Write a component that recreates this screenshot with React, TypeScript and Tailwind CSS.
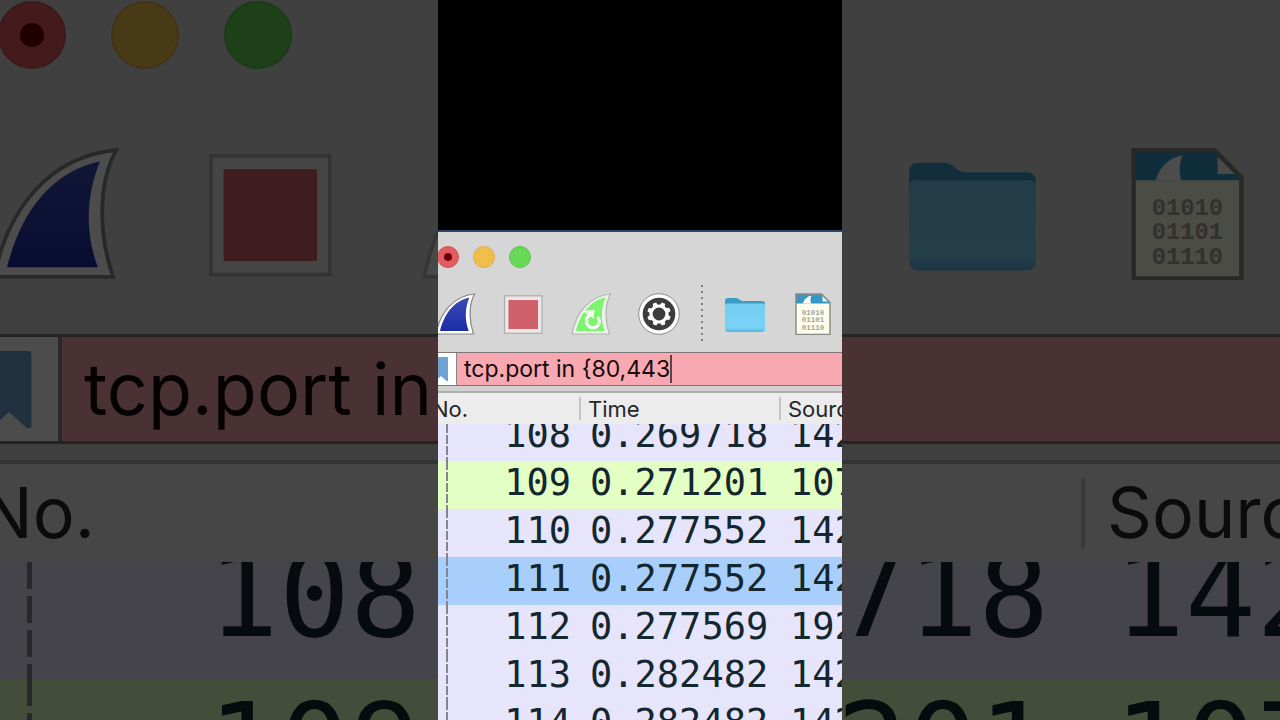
import { clsx } from "clsx";

type Variant = "front" | "backdrop";

const packets = [
  { no: "108", time: "0.269718", source: "142", tone: "tcp" },
  { no: "109", time: "0.271201", source: "107", tone: "http" },
  { no: "110", time: "0.277552", source: "142", tone: "tcp" },
  { no: "111", time: "0.277552", source: "142", tone: "selected" },
  { no: "112", time: "0.277569", source: "192", tone: "tcp" },
  { no: "113", time: "0.282482", source: "142", tone: "tcp" },
  { no: "114", time: "0.282482", source: "142", tone: "tcp" },
];

const tones: Record<string, string> = {
  tcp: "bg-[#e6e5fc]",
  http: "bg-[#e3ffc4]",
  selected: "bg-[#a8cffb]",
};

const sizes = {
  front: {
    window: "border-t-2",
    titleBar: "h-[61px] pt-[14px] -ml-px gap-[14px]",
    light: "size-[22px] border",
    lightDot: "size-2",
    toolbar: "h-[59px] -ml-1 gap-[26px]",
    slot: "size-[42px]",
    separator: "h-14 w-[2px] -mx-[5px] bg-size-[2px_6px]",
    filter: "h-[34px] border-y text-[23px]",
    bookmark: "w-[19px] border-r",
    ribbon: "h-6 w-[14px] -ml-1",
    input: "pl-[7px]",
    caret: "h-7 w-[2px]",
    gap: "h-[7px] border-b-2",
    th: "h-[31px] text-[22px] leading-none",
    no: "-ml-[6px]",
    thText: "h-[23px] border-l-[2px] pl-[7px]",
    row: "h-12 leading-[44px] text-[37px]",
    firstRow: "h-[37px]",
    noCell: "pr-2",
    cell: "pl-[11px]",
    tree: "ml-2 w-[2px] bg-[repeating-linear-gradient(#85858f_0_9px,transparent_9px_11px)]",
    cols: ["w-[141px]", "w-[200px]"],
  },
  backdrop: {
    window: "-mt-[49px] border-t-[6px]",
    titleBar: "h-[190px] pt-[44px] -ml-[2px] gap-[45px]",
    light: "size-[68px] border-2",
    lightDot: "size-6",
    toolbar: "h-[187px] -ml-3 gap-[82px]",
    slot: "size-[133px]",
    separator: "h-[177px] w-[6px] -mx-[15px] bg-size-[6px_18px]",
    filter: "h-[110px] border-y-[3px] text-[72px]",
    bookmark: "w-[62px] border-r-[4px]",
    ribbon: "h-[77px] w-[46px] -ml-[14px]",
    input: "pl-[22px]",
    caret: "h-[88px] w-[6px]",
    gap: "h-5 border-b-[4px]",
    th: "h-[98px] text-[70px] leading-none",
    no: "-ml-5",
    thText: "h-[71px] border-l-[4px] pl-[22px]",
    row: "h-[151px] leading-[135px] text-[118px]",
    firstRow: "h-[117px]",
    noCell: "pr-[27px]",
    cell: "pl-[33px]",
    tree: "ml-[27px] w-[5px] bg-[repeating-linear-gradient(#85858f_0_27px,transparent_27px_34px)]",
    cols: ["w-[448px]", "w-[633px]"],
  },
};

function FinIcon({ restart = false }: { restart?: boolean }) {
  return (
    <svg viewBox="0 0 42 42" className="size-full">
      <defs>
        <linearGradient id="fin" x1="0" y1="0" x2="0" y2="1">
          <stop offset="0" stopColor="#3d4bb5" />
          <stop offset="1" stopColor="#1b2da8" />
        </linearGradient>
      </defs>
      <path
        d="M2 41C6 20 19 3 40.500 1C34.500 12 35 28 39.500 41Z"
        fill={restart ? "#eaf3e8" : "#fff"}
        stroke={restart ? "#b4b4b4" : "#858585"}
        strokeWidth="1.2"
      />
      <path
        d="M6 38C10 22 19 8 35.400 4.500C31 15 30.500 27 34.700 38Z"
        fill={restart ? "#7df36e" : "url(#fin)"}
      />
      {restart && (
        <>
          <path d="M27.500 24.200A6.300 6.300 0 1 1 17 26.500" fill="none" stroke="#f2fff0" strokeWidth="3.300" />
          <path d="M12.500 18L24.500 16.700L23.500 26L20.500 23.500L16.500 28L14.500 26L17.500 21.500Z" fill="#f2fff0" />
        </>
      )}
    </svg>
  );
}

function StopIcon() {
  return (
    <svg viewBox="0 0 42 42" className="size-full">
      <rect x="2.500" y="2.800" width="37.500" height="37.500" fill="#ebe7e7" stroke="#acacac" strokeWidth="1.200" />
      <rect x="6.500" y="7" width="29.500" height="29" fill="#cf5f6b" />
    </svg>
  );
}

function GearIcon() {
  const teeth = [0, 45, 90, 135, 180, 225, 270, 315];
  return (
    <svg viewBox="0 0 42 42" className="size-full">
      <circle cx="21" cy="21" r="20.300" fill="#fff" stroke="#8b8b8b" strokeWidth="1" />
      <circle cx="21" cy="21" r="16.300" fill="#3c3c3c" />
      <circle cx="21" cy="21" r="8" fill="none" stroke="#fff" strokeWidth="3.200" />
      {teeth.map((a) => (
        <path key={a} d="M18.400 12.500L19.200 9.200H22.800L23.600 12.500Z" fill="#fff" transform={`rotate(${a + 22} 21 21)`} />
      ))}
    </svg>
  );
}

function FolderIcon() {
  return (
    <svg viewBox="0 0 42 42" className="size-full">
      <defs>
        <linearGradient id="folder" x1="0" y1="0" x2="0" y2="1">
          <stop offset="0" stopColor="#74cdf0" />
          <stop offset="0.850" stopColor="#79d3f6" />
          <stop offset="1" stopColor="#57b3dc" />
        </linearGradient>
      </defs>
      <path d="M1 8Q1 5 4 5H12Q14 5 15.500 6.500Q17 8 19 8H38Q41 8 41 11V20H1Z" fill="#3c9cc6" />
      <path d="M1 12.500Q1 10.500 3 10.500H39Q41 10.500 41 12.500V36Q41 39 38 39H4Q1 39 1 36Z" fill="url(#folder)" />
    </svg>
  );
}

function FileIcon() {
  return (
    <svg viewBox="0 0 42 42" className="size-full">
      <path d="M4 1H29.500L38 9.500V41.500H4Z" fill="#fdfeee" />
      <path d="M4 1H29.500L38 9.500V10.500H4Z" fill="#3497c6" />
      <path d="M11 10.500C12 6.500 15 3.500 19.500 2.500C18.300 5 18.300 8 19 10.500Z" fill="#fff" />
      <path d="M30.500 3V8.500H36Z" fill="#f4f5ee" />
      <path d="M4 1H29.500L38 9.500V41.500H4Z" fill="none" stroke="#848a80" strokeWidth="1.400" />
      <g fontFamily="Liberation Mono, monospace" fontSize="7.500" fontWeight="bold" fill="#a3a498" textAnchor="middle">
        <text x="21" y="21.500">01010</text>
        <text x="21" y="29">01101</text>
        <text x="21" y="37">01110</text>
      </g>
    </svg>
  );
}

function CaptureWindow({ variant }: { variant: Variant }) {
  const s = sizes[variant];
  const button = clsx("shrink-0", s.slot);

  return (
    <div className={clsx("overflow-hidden border-[#28476b] bg-[#d6d6d6]", s.window)}>
      <div className={clsx("flex items-start", s.titleBar)}>
        <button aria-label="Close" className={clsx("flex shrink-0 items-center justify-center rounded-full border-[#cf5053] bg-[#e35d60]", s.light)}>
          <span className={clsx("rounded-full bg-[#6b0005]", s.lightDot)} />
        </button>
        <button aria-label="Minimize" className={clsx("shrink-0 rounded-full border-[#ddac45] bg-[#f1be4e]", s.light)} />
        <button aria-label="Zoom" className={clsx("shrink-0 rounded-full border-[#5ac54e] bg-[#67d957]", s.light)} />
      </div>

      <div className={clsx("flex items-start", s.toolbar)}>
        <button aria-label="Start capture" className={button}><FinIcon /></button>
        <button aria-label="Stop capture" className={button}><StopIcon /></button>
        <button aria-label="Restart capture" className={button}><FinIcon restart /></button>
        <button aria-label="Capture options" className={button}><GearIcon /></button>
        <span
          className={clsx(
            "-my-2 shrink-0 bg-[linear-gradient(#7d7d7d_33%,transparent_33%)]",
            s.separator
          )}
        />
        <button aria-label="Open" className={button}><FolderIcon /></button>
        <button aria-label="Save" className={button}><FileIcon /></button>
      </div>

      <div className={clsx("flex items-center border-[#7c7678] bg-[#f7a8b0] font-[Inter,sans-serif]", s.filter)}>
        <button aria-label="Bookmarks" className={clsx("flex h-full shrink-0 items-center border-[#8d8688] bg-white", s.bookmark)}>
          <svg viewBox="0 0 14 24" className={clsx("shrink-0", s.ribbon)}>
            <path d="M0 1Q0 0 1 0H13Q14 0 14 1V24H12.500L7 19L1.500 24H0Z" fill="#71a1d1" />
          </svg>
        </button>
        <input
          aria-label="Display filter"
          defaultValue="tcp.port in {80,443"
          spellCheck={false}
          className={clsx("field-sizing-content bg-transparent text-[#16090b] outline-none", s.input)}
        />
        <span className={clsx("shrink-0 bg-[#5b4548]", s.caret)} />
      </div>

      <div className={clsx("border-[#adadad] bg-[#d2d2d2]", s.gap)} />

      <table className="w-full table-fixed border-collapse">
        <thead className="bg-[#ececec] font-[Inter,sans-serif] text-[#262626]">
          <tr>
            <th className={clsx("p-0 text-left font-normal", s.th, s.cols[0])}>
              <div className={clsx("flex items-center", s.no)}>No.</div>
            </th>
            <th className={clsx("p-0 text-left font-normal", s.th, s.cols[1])}>
              <div className={clsx("flex items-center border-[#c4c4c4]", s.thText)}>Time</div>
            </th>
            <th className={clsx("p-0 text-left font-normal", s.th)}>
              <div className={clsx("flex items-center border-[#c4c4c4]", s.thText)}>Source</div>
            </th>
          </tr>
        </thead>
        <tbody className="font-['DejaVu_Sans_Mono',monospace] text-[#14262e]">
          {packets.map((p, i) => {
            const clip = clsx("flex items-end overflow-hidden", i === 0 && s.firstRow);
            return (
              <tr key={p.no} className={tones[p.tone]}>
                <td className="p-0">
                  <div className={clip}>
                    <span className={clsx("shrink-0 self-stretch", s.tree)} />
                    <span className={clsx("grow text-right", s.row, s.noCell)}>{p.no}</span>
                  </div>
                </td>
                <td className="p-0">
                  <div className={clip}>
                    <span className={clsx("shrink-0", s.row, s.cell)}>{p.time}</span>
                  </div>
                </td>
                <td className="p-0">
                  <div className={clip}>
                    <span className={clsx("shrink-0", s.row, s.cell)}>{p.source}</span>
                  </div>
                </td>
              </tr>
            );
          })}
        </tbody>
      </table>
    </div>
  );
}

export default function App() {
  return (
    <div className="relative h-screen overflow-hidden bg-black">
      <div aria-hidden="true" inert className="absolute inset-0 overflow-hidden">
        <CaptureWindow variant="backdrop" />
        <div className="absolute inset-0 bg-black/70" />
      </div>
      <main className="relative mx-auto h-full w-101 overflow-hidden bg-black pt-[230px]">
        <CaptureWindow variant="front" />
      </main>
    </div>
  );
}
